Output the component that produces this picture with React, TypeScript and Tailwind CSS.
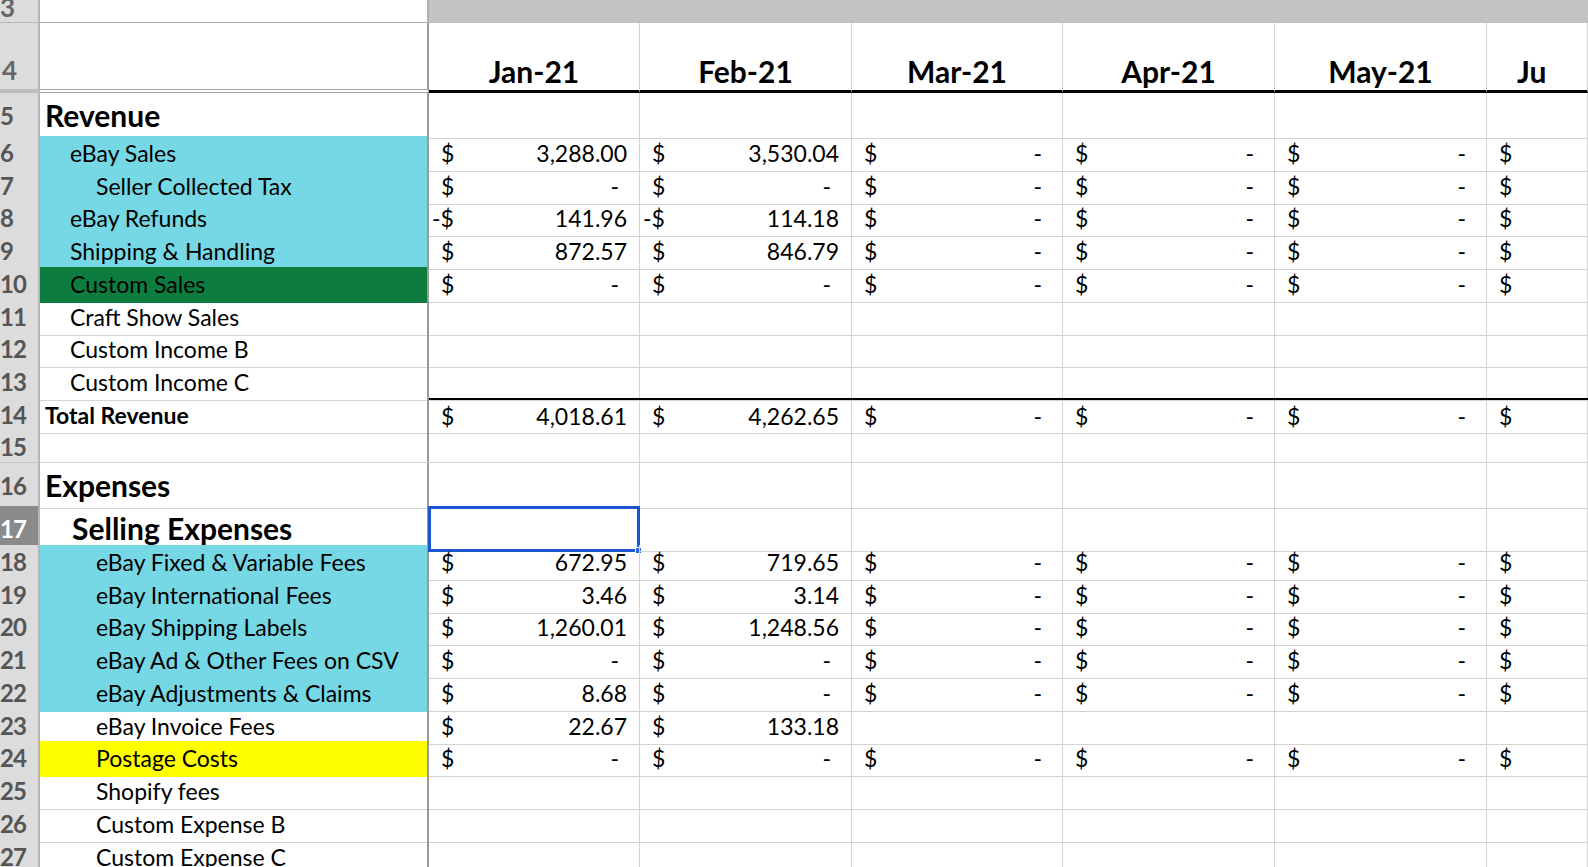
import React from "react";

type Cell = null | { neg?: boolean; v: string };
type RowDef = {
  n: string;
  h: string;
  label?: string;
  indent?: 0 | 1 | 2;
  kind?: "big" | "bold" | "sub";
  bg?: string;
  vals?: Cell[];
  topLine?: boolean;
  selected?: boolean;
};

const full = (a: Cell, b: Cell): Cell[] => [a, b, { v: "-" }, { v: "-" }, { v: "-" }, { v: "" }];

const rows: RowDef[] = [
  { n: "5", h: "h-[43px]", label: "Revenue", kind: "big" },
  { n: "6", h: "h-[33px]", label: "eBay Sales", indent: 1, bg: "bg-[#76d8e4]", vals: full({ v: "3,288.00" }, { v: "3,530.04" }) },
  { n: "7", h: "h-[32px]", label: "Seller Collected Tax", indent: 2, kind: "sub", bg: "bg-[#76d8e4]", vals: full({ v: "-" }, { v: "-" }) },
  { n: "8", h: "h-[33px]", label: "eBay Refunds", indent: 1, bg: "bg-[#76d8e4]", vals: full({ neg: true, v: "141.96" }, { neg: true, v: "114.18" }) },
  { n: "9", h: "h-[33px]", label: "Shipping & Handling", indent: 1, bg: "bg-[#76d8e4]", vals: full({ v: "872.57" }, { v: "846.79" }) },
  { n: "10", h: "h-[33px]", label: "Custom Sales", indent: 1, bg: "bg-[#0c7d3f]", vals: full({ v: "-" }, { v: "-" }) },
  { n: "11", h: "h-[32px]", label: "Craft Show Sales", indent: 1 },
  { n: "12", h: "h-[33px]", label: "Custom Income B", indent: 1 },
  { n: "13", h: "h-[33px]", label: "Custom Income C", indent: 1 },
  { n: "14", h: "h-[33px]", label: "Total Revenue", kind: "bold", topLine: true, vals: full({ v: "4,018.61" }, { v: "4,262.65" }) },
  { n: "15", h: "h-[32px]" },
  { n: "16", h: "h-[43px]", label: "Expenses", kind: "big" },
  { n: "17", h: "h-[39px]", label: "Selling Expenses", kind: "big", indent: 1, selected: true },
  { n: "18", h: "h-[33px]", label: "eBay Fixed & Variable Fees", indent: 2, bg: "bg-[#76d8e4]", vals: full({ v: "672.95" }, { v: "719.65" }) },
  { n: "19", h: "h-[32px]", label: "eBay International Fees", indent: 2, bg: "bg-[#76d8e4]", vals: full({ v: "3.46" }, { v: "3.14" }) },
  { n: "20", h: "h-[33px]", label: "eBay Shipping Labels", indent: 2, bg: "bg-[#76d8e4]", vals: full({ v: "1,260.01" }, { v: "1,248.56" }) },
  { n: "21", h: "h-[33px]", label: "eBay Ad & Other Fees on CSV", indent: 2, bg: "bg-[#76d8e4]", vals: full({ v: "-" }, { v: "-" }) },
  { n: "22", h: "h-[33px]", label: "eBay Adjustments & Claims", indent: 2, bg: "bg-[#76d8e4]", vals: full({ v: "8.68" }, { v: "-" }) },
  { n: "23", h: "h-[32px]", label: "eBay Invoice Fees", indent: 2, vals: [{ v: "22.67" }, { v: "133.18" }, null, null, null, null] },
  { n: "24", h: "h-[33px]", label: "Postage Costs", indent: 2, bg: "bg-[#ffff00]", vals: full({ v: "-" }, { v: "-" }) },
  { n: "25", h: "h-[33px]", label: "Shopify fees", indent: 2 },
  { n: "26", h: "h-[33px]", label: "Custom Expense B", indent: 2 },
  { n: "27", h: "h-[30px]", label: "Custom Expense C", indent: 2 },
];

const months = ["Jan-21", "Feb-21", "Mar-21", "Apr-21", "May-21", "Ju"];
const grid = "grid grid-cols-[40px_389px_211px_212px_211px_212px_212px_1fr]";

function ValueCell({ c, last }: { c: Cell; last: boolean }) {
  if (!c) return <div className="border-r border-b border-[#d4d4d4]" />;
  return (
    <div className={`flex items-center justify-between border-r border-b border-[#d4d4d4] ${c.neg ? "pl-[3px]" : "pl-[12px]"} pr-[12px] text-[23px] leading-none`}>
      <span>{c.neg ? "-$" : "$"}</span>
      {!last && <span className={c.v === "-" ? "pr-[8px]" : ""}>{c.v}</span>}
    </div>
  );
}

export default function App() {
  return (
    <div className="w-[1588px] h-[867px] overflow-hidden bg-white text-black" style={{ fontFamily: "Lato, 'Open Sans', sans-serif" }}>
      {/* row 3 */}
      <div className={`${grid} h-[23px]`}>
        <div className="bg-[#dcdcdc] border-r-2 border-b border-[#b5b5b5] text-[#666] font-bold text-[26px] leading-[14px] overflow-hidden">3</div>
        <div className="border-r-2 border-b border-[#b0b0b0]" />
        <div className="col-span-6 bg-[#c3c3c3] border-b border-[#c3c3c3]" />
      </div>
      {/* row 4 */}
      <div className={`${grid} h-[70px]`}>
        <div className="bg-[#dcdcdc] border-r-2 border-b-4 border-b-[#bdbdbd] border-r-[#b5b5b5] text-[#666] font-bold text-[26px] leading-none flex items-end pb-[6px] pl-[2px]">4</div>
        <div className="border-r-2 border-r-[#9a9a9a] border-b-4 border-double border-b-[#a0a0a0]" />
        {months.map((m, i) => (
          <div key={m} className={`flex items-end border-b-[3px] border-black border-r border-r-[#d4d4d4] pb-[4px] font-bold text-[30px] leading-none ${i === 5 ? "pl-[30px]" : "justify-center"}`}>
            {m}
          </div>
        ))}
      </div>
      {rows.map((r) => {
        const labelCls =
          r.kind === "big"
            ? "font-bold text-[30px]"
            : r.kind === "bold"
            ? "font-bold text-[23px]"
            : "text-[23px]";
        const pad = r.indent === 2 ? "pl-[56px]" : r.indent === 1 ? (r.kind === "big" ? "pl-[32px]" : "pl-[30px]") : "pl-[5px]";
        return (
          <div key={r.n} className={`${grid} ${r.h}`}>
            <div className={`${r.selected ? "bg-[#8a8a8a] text-white" : "bg-[#dcdcdc] text-[#555]"} border-r-2 border-r-[#b5b5b5] border-b border-b-[#c4c4c4] font-bold text-[24px] flex items-center overflow-hidden whitespace-nowrap tracking-[-1px]`}>
              {r.n}
            </div>
            <div className={`${r.bg ?? ""} border-r-2 border-r-[#9a9a9a] border-b ${r.bg ? "border-b-transparent" : "border-b-[#d4d4d4]"} flex items-center ${pad} ${labelCls} whitespace-nowrap`}>
              {r.label}
            </div>
            {Array.from({ length: 6 }).map((_, i) => {
              const c = r.vals ? r.vals[i] : null;
              const top = r.topLine ? "border-t-2 border-t-black" : "";
              return (
                <div key={i} className={`relative grid ${top}`}>
                  <ValueCell c={c} last={i === 5} />
                  {r.selected && i === 0 && (
                    <div className="absolute inset-0 -left-[1px] border-[3px] border-[#1d55d0]">
                      <div className="absolute -right-[5px] -bottom-[5px] w-[7px] h-[7px] bg-[#2c66dc] border border-white" />
                    </div>
                  )}
                </div>
              );
            })}
          </div>
        );
      })}
    </div>
  );
}
